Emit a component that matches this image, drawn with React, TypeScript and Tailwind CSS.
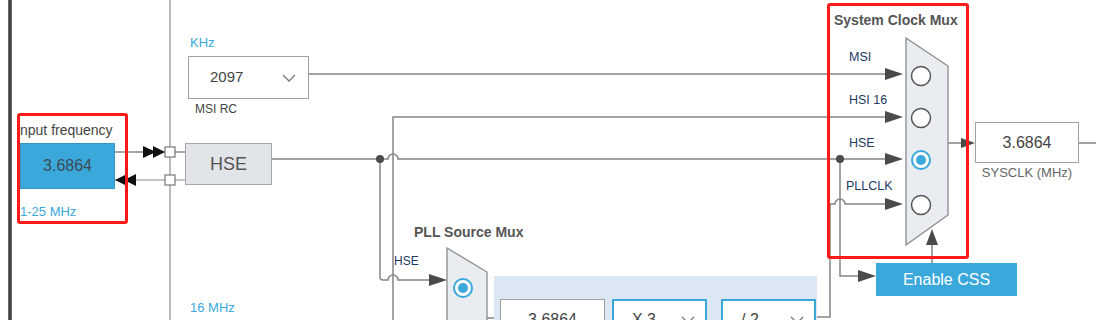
import React from "react"

const wire = "#858585"
const dark = "#4a4a4a"
const blue = "#3aa8db"

function Arrow({ x, y, dir = "r", s = 18, h = 6, fill = dark }: { x: number; y: number; dir?: "r" | "l" | "u"; s?: number; h?: number; fill?: string }) {
  // x,y is the tip
  let pts = ""
  if (dir === "r") pts = `${x - s},${y - h} ${x},${y} ${x - s},${y + h}`
  if (dir === "l") pts = `${x + s},${y - h} ${x},${y} ${x + s},${y + h}`
  if (dir === "u") pts = `${x - h},${y + s} ${x},${y} ${x + h},${y + s}`
  return <polygon points={pts} fill={fill} />
}

function Radio({ cx, cy, on = false }: { cx: number; cy: number; on?: boolean }) {
  return on ? (
    <g>
      <circle cx={cx} cy={cy} r={9} fill="#fff" stroke={blue} strokeWidth={2} />
      <circle cx={cx} cy={cy} r={5} fill={blue} />
    </g>
  ) : (
    <circle cx={cx} cy={cy} r={9.5} fill="#fff" stroke="#555" strokeWidth={1.5} />
  )
}

function Chevron({ className }: { className: string }) {
  return (
    <svg className={className} width="14" height="8" viewBox="0 0 14 8" fill="none">
      <polyline points="1,1 7,7 13,1" stroke="#777" strokeWidth="1.3" />
    </svg>
  )
}

export default function App() {
  return (
    <div className="relative w-[1096px] h-[320px] overflow-hidden bg-white font-['Liberation_Sans',Arial,sans-serif]">
      {/* wires and mux shapes */}
      <svg className="absolute inset-0" width="1096" height="320" viewBox="0 0 1096 320">
        <rect x="8" y="0" width="4" height="320" fill="#6a6a6a" />
        <rect x="9" y="0" width="2" height="320" fill="#444" />
        <line x1="170" y1="0" x2="170" y2="320" stroke="#9a9a9a" strokeWidth="1.3" />

        {/* input frequency <-> HSE */}
        <line x1="115" y1="152" x2="185" y2="152" stroke={dark} strokeWidth="1.2" />
        <line x1="115" y1="180" x2="185" y2="180" stroke={wire} strokeWidth="1.2" />
        <Arrow x={156} y={152} s={13} h={6} fill="#111" />
        <Arrow x={165} y={152} s={12} h={6} fill="#111" />
        <Arrow x={115} y={180} dir="l" s={12} h={6} fill="#111" />
        <Arrow x={124} y={180} dir="l" s={12} h={6} fill="#111" />
        <rect x="165" y="147" width="10" height="10" fill="#fff" stroke="#777" strokeWidth="1.2" />
        <rect x="165" y="175" width="10" height="10" fill="#fff" stroke="#777" strokeWidth="1.2" />

        <g fill="none" stroke={wire} strokeWidth="1.5">
          {/* MSI */}
          <path d="M309 74 H888" />
          {/* HSI16 */}
          <path d="M393 320 V117 H888" />
          {/* HSE main */}
          <path d="M272 159 H388 A5 5 0 0 1 398 159 H888" />
          {/* HSE to PLL mux */}
          <path d="M380 159 V277 Q380 280 383 280 H388 A5 5 0 0 1 398 280 H430" />
          {/* HSE to CSS */}
          <path d="M840 159 V276 H860" />
          {/* PLLCLK */}
          <path d="M815 317 H830 V204 H835 A5 5 0 0 1 845 204 H888" />
          {/* PLL chain */}
          <path d="M487 318 H500" />
          <path d="M707 317 H721" />
          {/* CSS up */}
          <path d="M932 263 V244" />
          {/* SYSCLK */}
          <path d="M948 143 H962" />
          <path d="M1079 143 H1096" />
        </g>

        <Arrow x={903} y={74} />
        <Arrow x={903} y={117} />
        <Arrow x={903} y={159} />
        <Arrow x={903} y={204} />
        <Arrow x={447} y={280} />
        <Arrow x={876} y={276} />
        <Arrow x={932} y={229} dir="u" s={16} h={6} />
        <Arrow x={975} y={143} s={14} h={5} />

        <circle cx="380" cy="159" r="4" fill={dark} />
        <circle cx="840" cy="159" r="4" fill={dark} />

        {/* System clock mux */}
        <polygon points="906,38 948,66 948,215 906,245" fill="#e9edf1" stroke="#8a8a8a" strokeWidth="1.3" />
        <Radio cx={921} cy={76} />
        <Radio cx={921} cy={118} />
        <Radio cx={921} cy={160} on />
        <Radio cx={921} cy={205} />

        {/* PLL source mux */}
        <polygon points="447,248 487,272 487,330 447,330" fill="#e9edf1" stroke="#8a8a8a" strokeWidth="1.3" />
        <Radio cx={463} cy={288} on />
      </svg>

      {/* input frequency, framed in red */}
      <div className="absolute left-[17px] top-[113px] w-[111px] h-[111px] border-[3px] border-[#ff1a1a] rounded-[3px] flex flex-col pt-[7px]">
        <div className="text-[14px] leading-none text-[#444] whitespace-nowrap">nput frequency</div>
        <div className="mt-[6px] w-[95px] h-[46px] bg-[#3aa8db] border border-[#3597c9] flex items-center justify-center text-[16px] text-[#3d4a57]">
          3.6864
        </div>
        <div className="mt-[16px] text-[13px] leading-none text-[#3aa8db]">1-25 MHz</div>
      </div>

      {/* HSE */}
      <div className="absolute left-[185px] top-[143px] w-[87px] h-[42px] bg-[#e1e4e8] border border-[#a3a7ab] flex items-center justify-center text-[18px] text-[#555]">
        HSE
      </div>

      {/* MSI RC */}
      <div className="absolute left-[188px] top-[36px] flex flex-col">
        <div className="ml-[2px] text-[13px] leading-none text-[#3aa8db]">KHz</div>
        <div className="mt-[7px] w-[121px] h-[43px] bg-white border border-[#a0a0a0] flex items-center pl-[21px] pr-[12px] text-[15px] text-[#444]">
          <span className="flex-1">2097</span>
          <Chevron className="" />
        </div>
        <div className="ml-[7px] mt-[4px] text-[12px] leading-none text-[#444]">MSI RC</div>
      </div>

      <div className="absolute left-[190px] top-[301px] text-[13px] leading-none text-[#3aa8db]">16 MHz</div>

      {/* PLL source mux */}
      <div className="absolute left-[414px] top-[225px] text-[14px] font-bold leading-none text-[#555]">PLL Source Mux</div>
      <div className="absolute left-[394px] top-[255px] text-[12px] leading-none text-[#1d3a62]">HSE</div>

      {/* PLL panel */}
      <div className="absolute left-[494px] top-[276px] w-[323px] h-[50px] bg-[#dbe8f4]">
        <div className="flex gap-[7px] pl-[6px] pt-[23px]">
          <div className="w-[105px] h-[30px] bg-white border border-[#a0a0a0] flex items-start justify-center pt-[8px] text-[16px] text-[#444]">3.6864</div>
          <div className="w-[95px] h-[30px] bg-white border-2 border-[#3aa8db] flex items-start pl-[18px] pr-[10px] pt-[7px] text-[16px] text-[#444]">
            <span className="flex-1">X 3</span>
            <Chevron className="mt-[8px]" />
          </div>
          <div className="ml-[7px] w-[95px] h-[30px] bg-white border-2 border-[#3aa8db] flex items-start pl-[18px] pr-[10px] pt-[7px] text-[16px] text-[#444]">
            <span className="flex-1">/ 2</span>
            <Chevron className="mt-[8px]" />
          </div>
        </div>
      </div>

      {/* System clock mux, framed in red */}
      <div className="absolute left-[827px] top-[3px] w-[142px] h-[256px] border-[3px] border-[#ff1a1a] rounded-[3px] flex flex-col pt-[7px] pl-[4px]">
        <div className="text-[14px] font-bold leading-none text-[#555] whitespace-nowrap">System Clock Mux</div>
        <div className="mt-[24px] ml-[15px] flex flex-col gap-[30.5px] text-[12.5px] leading-none text-[#1d3a62]">
          <div>MSI</div>
          <div>HSI 16</div>
          <div>HSE</div>
          <div className="-ml-[3px]">PLLCLK</div>
        </div>
      </div>

      <div className="absolute left-[876px] top-[263px] w-[141px] h-[33px] bg-[#3aa8db] flex items-center justify-center text-[16px] text-white">
        Enable CSS
      </div>

      {/* SYSCLK */}
      <div className="absolute left-[975px] top-[122px] flex flex-col items-center">
        <div className="w-[104px] h-[41px] bg-white border border-[#a0a0a0] flex items-center justify-center text-[16px] text-[#444]">
          3.6864
        </div>
        <div className="mt-[3px] text-[13px] leading-none text-[#666]">SYSCLK (MHz)</div>
      </div>
    </div>
  )
}
